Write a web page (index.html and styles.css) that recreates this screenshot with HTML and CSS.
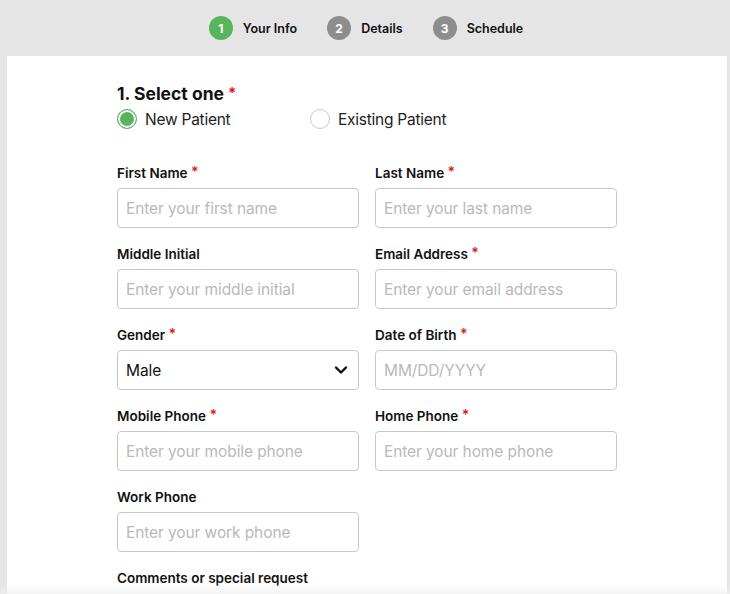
FILE: index.html
```html
<!DOCTYPE html>
<html>
<head>
<meta charset="utf-8">
<link rel="stylesheet" href="styles.css">
</head>
<body>
<header class="steps">
  <div class="step"><span class="num active">1</span><span class="step-label">Your Info</span></div>
  <div class="step"><span class="num">2</span><span class="step-label">Details</span></div>
  <div class="step"><span class="num">3</span><span class="step-label">Schedule</span></div>
</header>
<main class="panel">
  <form class="form">
    <h2 class="title">1. Select one <span class="req">*</span></h2>
    <div class="radios">
      <label class="radio"><span class="dot checked"></span>New Patient</label>
      <label class="radio"><span class="dot"></span>Existing Patient</label>
    </div>
    <div class="grid">
      <div class="field">
        <div class="label">First Name <span class="req">*</span></div>
        <input class="input" placeholder="Enter your first name">
      </div>
      <div class="field">
        <div class="label">Last Name <span class="req">*</span></div>
        <input class="input" placeholder="Enter your last name">
      </div>
      <div class="field">
        <div class="label">Middle Initial</div>
        <input class="input" placeholder="Enter your middle initial">
      </div>
      <div class="field">
        <div class="label">Email Address <span class="req">*</span></div>
        <input class="input" placeholder="Enter your email address">
      </div>
      <div class="field">
        <div class="label">Gender <span class="req">*</span></div>
        <div class="select">
          <span>Male</span>
          <svg class="chev" width="14" height="10" viewBox="0 0 14 10"><path d="M2 2.5 L7 7.5 L12 2.5" fill="none" stroke="#111" stroke-width="2.4" stroke-linecap="round" stroke-linejoin="round"/></svg>
        </div>
      </div>
      <div class="field">
        <div class="label">Date of Birth <span class="req">*</span></div>
        <input class="input" placeholder="MM/DD/YYYY">
      </div>
      <div class="field">
        <div class="label">Mobile Phone <span class="req">*</span></div>
        <input class="input" placeholder="Enter your mobile phone">
      </div>
      <div class="field">
        <div class="label">Home Phone <span class="req">*</span></div>
        <input class="input" placeholder="Enter your home phone">
      </div>
      <div class="field">
        <div class="label">Work Phone</div>
        <input class="input" placeholder="Enter your work phone">
      </div>
      <div class="field"></div>
      <div class="field wide">
        <div class="label">Comments or special request</div>
      </div>
    </div>
  </form>
</main>
<div class="fade"></div>
</body>
</html>
```
FILE: styles.css
```css
* { box-sizing: border-box; }
html, body { margin: 0; padding: 0; }
body {
  background: #e5e5e5;
  font-family: Inter, "Noto Sans", "Liberation Sans", sans-serif;
  color: #111;
  height: 594px;
  overflow: hidden;
}
.steps {
  height: 56px;
  display: flex;
  justify-content: center;
  align-items: center;
  padding-left: 2px;
}
.step {
  display: flex;
  align-items: center;
  gap: 10px;
  margin-right: 30px;
}
.step:last-child { margin-right: 0; }
.num {
  width: 24px;
  height: 24px;
  border-radius: 50%;
  background: #8d8d8d;
  color: #fff;
  font-size: 12px;
  font-weight: 700;
  display: flex;
  align-items: center;
  justify-content: center;
}
.num.active { background: #58b55c; }
.step-label {
  font-size: 12.5px;
  font-weight: 600;
  color: #111;
}
.panel {
  background: #fff;
  margin: 0 3px 0 7px;
  height: 538px;
  padding-top: 27px;
}
.form {
  width: 500px;
  margin: 0 auto;
}
.title {
  margin: 0;
  font-size: 17.5px;
  line-height: 22px;
  font-weight: 700;
}
.req { color: #e0171e; font-size: 0.85em; line-height: 0; vertical-align: 2px; }
.radios {
  display: flex;
  margin-top: 4px;
  height: 20px;
  align-items: center;
}
.radio {
  display: flex;
  align-items: center;
  gap: 8px;
  font-size: 15.5px;
  letter-spacing: -0.25px;
  color: #222;
  width: 193px;
}
.dot {
  width: 20px;
  height: 20px;
  border-radius: 50%;
  border: 1px solid #c9c9c9;
  background: #fff;
  flex: none;
}
.dot.checked {
  border-color: #58b55c;
  background: #58b55c;
  box-shadow: inset 0 0 0 2px #fff;
}
.grid {
  margin-top: 35px;
  display: grid;
  grid-template-columns: 242px 242px;
  column-gap: 16px;
}
.field { margin-bottom: 17px; }
.label {
  font-size: 13.5px;
  font-weight: 600;
  line-height: 18px;
  height: 18px;
  margin-bottom: 6px;
  color: #111;
}
.label .req { font-size: 14px; vertical-align: 1px; }
.input, .select {
  display: block;
  width: 242px;
  height: 40px;
  border: 1px solid #c8c8c8;
  border-radius: 4px;
  padding: 0 8px;
  font-family: inherit;
  font-size: 15.5px;
  letter-spacing: -0.1px;
  color: #111;
  background: #fff;
  outline: none;
}
.input::placeholder { color: #b9b9b9; }
.select {
  display: flex;
  align-items: center;
  justify-content: space-between;
}
.chev { margin-right: 2px; }
.fade {
  position: fixed;
  left: 0; right: 0; bottom: 0;
  height: 12px;
  background: linear-gradient(to bottom, rgba(240,240,240,0), rgba(240,240,240,0.7));
  pointer-events: none;
}
```
